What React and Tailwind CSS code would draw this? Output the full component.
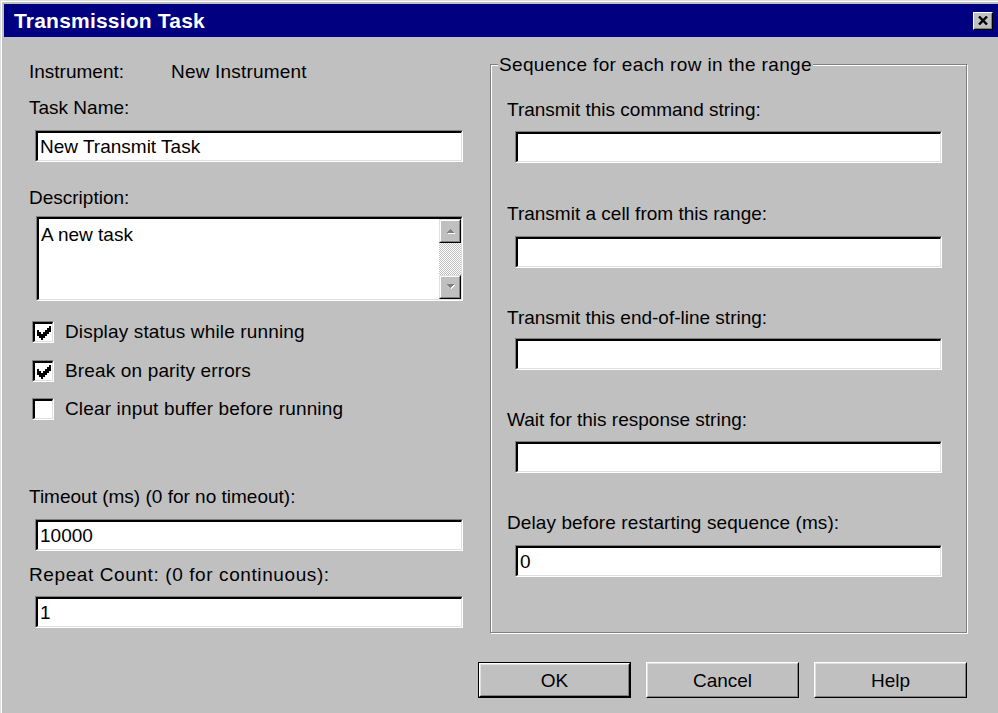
import React from "react";

// Win95-style bevels
const sunkenOuter =
  "border border-t-[#808080] border-l-[#808080] border-b-white border-r-white";
const sunkenInner =
  "border-t-2 border-l-2 border-t-black border-l-black border-b border-r border-b-[#dfdfdf] border-r-[#dfdfdf] bg-white";

function Label({ children, className = "" }) {
  return <div className={`leading-[22px] whitespace-nowrap ${className}`}>{children}</div>;
}

function TextBox({ value = "", className = "" }) {
  return (
    <div className={`${sunkenOuter} h-[32px] ${className}`}>
      <div
        className={`${sunkenInner} h-full flex items-center pl-[2px] overflow-hidden whitespace-nowrap leading-none`}
      >
        {value}
      </div>
    </div>
  );
}

const CHECK_ROWS = [
  "......X",
  ".....XX",
  "X...XXX",
  "XX.XXX.",
  "XXXXX..",
  ".XXX...",
  "..X....",
];

function CheckMark() {
  return (
    <svg width="14" height="14" viewBox="0 0 7 7" shapeRendering="crispEdges">
      {CHECK_ROWS.map((row, y) =>
        row.split("").map((c, x) =>
          c === "X" ? <rect key={`${x}-${y}`} x={x} y={y} width="1" height="1" fill="#000" /> : null
        )
      )}
    </svg>
  );
}

function CheckBox({ checked, label, className = "" }) {
  return (
    <div className={`flex items-center ${className}`}>
      <div className={`${sunkenOuter} w-[22px] h-[22px] shrink-0`}>
        <div className={`${sunkenInner} w-full h-full flex items-center justify-center`}>
          {checked && <CheckMark />}
        </div>
      </div>
      <span className="ml-[11px] leading-[22px] whitespace-nowrap tracking-[0.15px]">{label}</span>
    </div>
  );
}

function Arrow({ up }) {
  return (
    <svg width="9" height="6" viewBox="0 0 9 6" shapeRendering="crispEdges">
      <polygon
        points={up ? "5.5,2 9.5,6 1.5,6" : "5.5,5 9.5,1 1.5,1"}
        fill="#fff"
      />
      <polygon points={up ? "4.5,1 8.5,5 0.5,5" : "4.5,4 8.5,0 0.5,0"} fill="#808080" />
    </svg>
  );
}

function ScrollButton({ up }) {
  return (
    <div className="h-[24px] border border-t-[#dfdfdf] border-l-[#dfdfdf] border-b-black border-r-black bg-[#c0c0c0]">
      <div className="h-full border border-t-white border-l-white border-b-[#808080] border-r-[#808080] flex items-center justify-center">
        <Arrow up={up} />
      </div>
    </div>
  );
}

function Button({ label, isDefault }) {
  return (
    <div
      className={`w-[153px] h-[36px] ${isDefault ? "border border-black" : ""}`}
    >
      <div className="h-full border border-t-white border-l-white border-b-black border-r-black">
        <div className="h-full border border-t-[#dfdfdf] border-l-[#dfdfdf] border-b-[#808080] border-r-[#808080] flex items-center justify-center leading-none">
          {label}
        </div>
      </div>
    </div>
  );
}

function CloseButton() {
  return (
    <div className="w-[20px] h-[18px] bg-[#c0c0c0] border border-t-white border-l-white border-b-black border-r-black">
      <div className="h-full border border-t-[#c0c0c0] border-l-[#c0c0c0] border-b-[#808080] border-r-[#808080] flex items-center justify-center">
        <svg width="10" height="9" viewBox="0 0 10 9">
          <path d="M1 0.5 L9 8.5 M9 0.5 L1 8.5" stroke="#000" strokeWidth="2.4" />
        </svg>
      </div>
    </div>
  );
}

export default function App() {
  return (
    <div className="w-[998px] h-[713px] overflow-hidden bg-[#c0c0c0] border-t border-l border-[#dfdfdf] text-[19px] text-black font-['Liberation_Sans',Arial,sans-serif]">
      <div className="h-full border-t border-l border-white pt-[2px] pl-[2px] flex flex-col">
        {/* Caption bar */}
        <div className="h-[33px] shrink-0 bg-[#000080] flex items-center justify-between pl-[10px] pr-[5px]">
          <span className="text-white font-bold text-[21px] leading-none tracking-[0.2px]">Transmission Task</span>
          <CloseButton />
        </div>

        <div className="flex">
          {/* Task settings */}
          <div className="ml-[25px] w-[434px] flex flex-col pt-[24px]">
            <div className="flex leading-[22px]">
              <span className="w-[142px]">Instrument:</span>
              <span className="tracking-[0.2px]">New Instrument</span>
            </div>
            <Label className="mt-[14px]">Task Name:</Label>
            <TextBox value="New Transmit Task" className="mt-[11px] ml-[6px] w-[428px]" />

            <Label className="mt-[25px]">Description:</Label>
            <div className={`${sunkenOuter} mt-[7px] ml-[7px] w-[427px] h-[85px]`}>
              <div className={`${sunkenInner} h-full flex`}>
                <div className="flex-1 pl-[2px] pt-[5px] leading-[22px]">A new task</div>
                <div className="w-[22px] flex flex-col">
                  <ScrollButton up />
                  <div className="flex-1 bg-[repeating-conic-gradient(#ffffff_0_25%,#c0c0c0_0_50%)] bg-[length:2px_2px]" />
                  <ScrollButton />
                </div>
              </div>
            </div>

            <CheckBox checked label="Display status while running" className="mt-[20px] ml-[3px]" />
            <CheckBox checked label="Break on parity errors" className="mt-[17px] ml-[3px]" />
            <CheckBox label="Clear input buffer before running" className="mt-[16px] ml-[3px]" />

            <Label className="mt-[66px]">Timeout (ms) (0 for no timeout):</Label>
            <TextBox value="10000" className="mt-[11px] ml-[6px] w-[428px]" />
            <Label className="mt-[13px] tracking-[0.6px]">Repeat Count: (0 for continuous):</Label>
            <TextBox value="1" className="mt-[10px] ml-[6px] w-[428px]" />
          </div>

          {/* Sequence group box */}
          <div className="ml-[27px] mt-[27px] w-[477px] h-[569px] relative border border-[#808080] shadow-[inset_1px_1px_0_#ffffff,1px_1px_0_#ffffff] pt-[34px] pl-[16px] flex flex-col">
            <div className="absolute -top-[11px] left-[7px] px-[1px] bg-[#c0c0c0] leading-[22px] whitespace-nowrap tracking-[0.35px]">
              Sequence for each row in the range
            </div>
            <Label>Transmit this command string:</Label>
            <TextBox className="mt-[10px] ml-[8px] w-[427px]" />
            <Label className="mt-[40px]">Transmit a cell from this range:</Label>
            <TextBox className="mt-[11px] ml-[8px] w-[427px]" />
            <Label className="mt-[39px]">Transmit this end-of-line string:</Label>
            <TextBox className="mt-[9px] ml-[8px] w-[427px]" />
            <Label className="mt-[39px]">Wait for this response string:</Label>
            <TextBox className="mt-[10px] ml-[8px] w-[427px]" />
            <Label className="mt-[39px] tracking-[0.1px]">Delay before restarting sequence (ms):</Label>
            <TextBox value="0" className="mt-[11px] ml-[8px] w-[427px]" />
          </div>
        </div>

        {/* Dialog buttons */}
        <div className="mt-[29px] flex justify-end gap-[15px] pr-[31px]">
          <Button label="OK" isDefault />
          <Button label="Cancel" />
          <Button label="Help" />
        </div>
      </div>
    </div>
  );
}
